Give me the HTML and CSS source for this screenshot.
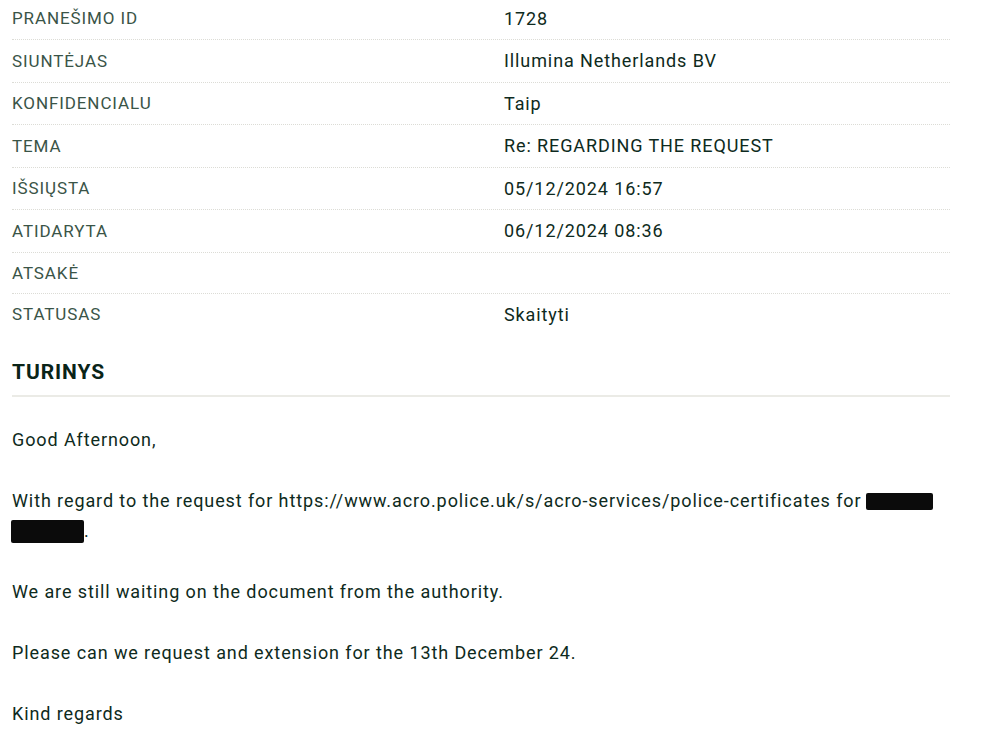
FILE: index.html
```html
<!DOCTYPE html>
<html lang="lt">
<head>
<meta charset="utf-8">
<title>Pranešimas</title>
<link rel="stylesheet" href="styles.css">
</head>
<body>
<div class="page">
  <dl class="meta">
    <div class="row"><dt>PRANEŠIMO ID</dt><dd>1728</dd></div>
    <div class="row"><dt>SIUNTĖJAS</dt><dd>Illumina Netherlands BV</dd></div>
    <div class="row"><dt>KONFIDENCIALU</dt><dd>Taip</dd></div>
    <div class="row"><dt>TEMA</dt><dd>Re: REGARDING THE REQUEST</dd></div>
    <div class="row"><dt>IŠSIŲSTA</dt><dd>05/12/2024 16:57</dd></div>
    <div class="row"><dt>ATIDARYTA</dt><dd>06/12/2024 08:36</dd></div>
    <div class="row row-empty"><dt>ATSAKĖ</dt><dd></dd></div>
    <div class="row row-last"><dt>STATUSAS</dt><dd>Skaityti</dd></div>
  </dl>
  <h2 class="section-title">TURINYS</h2>
  <div class="content">
    <p>Good Afternoon,</p>
    <p>With regard to the request for https://www.acro.police.uk/s/acro-services/police-certificates for <span class="redact redact-a"></span><br><span class="redact redact-b"></span>.</p>
    <p>We are still waiting on the document from the authority.</p>
    <p>Please can we request and extension for the 13th December 24.</p>
    <p>Kind regards</p>
  </div>
</div>
</body>
</html>
```

FILE: styles.css
```css
html, body {
  margin: 0;
  padding: 0;
  background: #ffffff;
}
body {
  font-family: Roboto, "Liberation Sans", Arial, sans-serif;
  color: #0e2a20;
  letter-spacing: 0.9px;
}
.page {
  width: 938px;
  padding: 0 0 0 12px;
  margin-top: -2.5px;
}
.meta {
  margin: 0;
}
.row {
  display: grid;
  grid-template-columns: 492px 1fr;
  align-items: center;
  height: 41.5px;
  border-bottom: 1px dotted #dcdcd6;
}
.row-empty {
  height: 40px;
}
.row-last {
  border-bottom: none;
}
.row dt {
  font-size: 17px;
  color: #3a5447;
  margin: 0;
}
.row dd {
  font-size: 18px;
  color: #0e2a20;
  margin: 0;
}
.section-title {
  margin: 25px 0 0;
  padding-bottom: 9.5px;
  font-size: 21px;
  line-height: 25px;
  font-weight: 700;
  color: #0a2418;
  border-bottom: 2px solid #ebebe6;
}
.content {
  padding-top: 28px;
}
.content p {
  margin: 0 0 31px;
  font-size: 18px;
  line-height: 30px;
  color: #0e2a20;
}
.redact {
  display: inline-block;
  background: #0b0b0b;
  border-radius: 2px;
  vertical-align: middle;
}
.redact-a {
  width: 67px;
  height: 17px;
  margin-left: -1px;
}
.redact-b {
  width: 73px;
  height: 23px;
  margin-left: -1px;
}
```
